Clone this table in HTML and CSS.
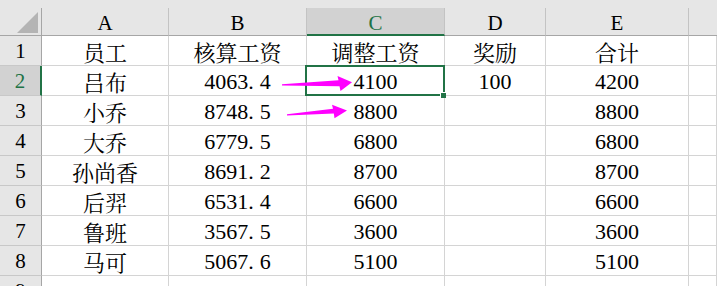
FILE: index.html
```html
<!DOCTYPE html>
<html lang="zh">
<head>
<meta charset="utf-8">
<title>Sheet</title>
<link rel="stylesheet" href="styles.css">
</head>
<body>
<div class="sheet">
  <div class="strip"></div>

  <div class="corner"><div class="tri"></div></div>
  <div class="ch">A</div>
  <div class="ch">B</div>
  <div class="ch ch-sel">C</div>
  <div class="ch">D</div>
  <div class="ch">E</div>
  <div class="ch ch-last"></div>

  <div class="rh">1</div>
  <div class="c">员工</div>
  <div class="c">核算工资</div>
  <div class="c">调整工资</div>
  <div class="c">奖励</div>
  <div class="c">合计</div>
  <div class="c"></div>

  <div class="rh rh-sel">2</div>
  <div class="c">吕布</div>
  <div class="c">4063<span class="dot">.</span>4</div>
  <div class="c sel">4100</div>
  <div class="c">100</div>
  <div class="c">4200</div>
  <div class="c"></div>

  <div class="rh">3</div>
  <div class="c">小乔</div>
  <div class="c">8748<span class="dot">.</span>5</div>
  <div class="c">8800</div>
  <div class="c"></div>
  <div class="c">8800</div>
  <div class="c"></div>

  <div class="rh">4</div>
  <div class="c">大乔</div>
  <div class="c">6779<span class="dot">.</span>5</div>
  <div class="c">6800</div>
  <div class="c"></div>
  <div class="c">6800</div>
  <div class="c"></div>

  <div class="rh">5</div>
  <div class="c">孙尚香</div>
  <div class="c">8691<span class="dot">.</span>2</div>
  <div class="c">8700</div>
  <div class="c"></div>
  <div class="c">8700</div>
  <div class="c"></div>

  <div class="rh">6</div>
  <div class="c">后羿</div>
  <div class="c">6531<span class="dot">.</span>4</div>
  <div class="c">6600</div>
  <div class="c"></div>
  <div class="c">6600</div>
  <div class="c"></div>

  <div class="rh">7</div>
  <div class="c">鲁班</div>
  <div class="c">3567<span class="dot">.</span>5</div>
  <div class="c">3600</div>
  <div class="c"></div>
  <div class="c">3600</div>
  <div class="c"></div>

  <div class="rh">8</div>
  <div class="c">马可</div>
  <div class="c">5067<span class="dot">.</span>6</div>
  <div class="c">5100</div>
  <div class="c"></div>
  <div class="c">5100</div>
  <div class="c"></div>

  <div class="rh">9</div>
  <div class="c"></div>
  <div class="c"></div>
  <div class="c"></div>
  <div class="c"></div>
  <div class="c"></div>
  <div class="c"></div>

  <svg class="arrows" width="717" height="286" viewBox="0 0 717 286" aria-hidden="true">
    <polygon points="282,84.2 338.5,80.2 337.5,76 352,82.3 340.5,91 339.5,86.2 282,85.4" fill="#ff00ff"/>
    <polygon points="287,114.2 333,108.8 332,104.8 347,110.6 334.5,118.2 333.8,113.6 287,115.4" fill="#ff00ff"/>
  </svg>
</div>
</body>
</html>
```

FILE: styles.css
```css
html, body {
  margin: 0;
  padding: 0;
  background: #ffffff;
  overflow: hidden;
}

.sheet {
  position: relative;
  width: 717px;
  height: 286px;
  overflow: hidden;
  display: grid;
  grid-template-columns: 42px 127px 138px 138px 101px 143px 1fr;
  grid-template-rows: 8px 28px repeat(9, 30px);
  font-family: "Liberation Serif", "Noto Serif CJK SC", "Noto Sans CJK SC", serif;
  color: #000;
}

.strip {
  grid-column: 1 / -1;
  background: #e6e6e6;
}

.corner {
  background: #e6e6e6;
  border-right: 1px solid #a6a6a6;
  border-bottom: 1px solid #a6a6a6;
  display: flex;
  justify-content: flex-end;
  align-items: flex-end;
  padding: 0 3px 2px 0;
  box-sizing: border-box;
}

.tri {
  width: 21px;
  height: 21px;
  background: #b4b4b4;
  clip-path: polygon(100% 0, 100% 100%, 0 100%);
}

.ch {
  background: #e6e6e6;
  border-right: 1px solid #c3c3c3;
  border-bottom: 1px solid #a6a6a6;
  box-sizing: border-box;
  display: flex;
  align-items: center;
  justify-content: center;
  font-size: 21px;
  padding-top: 3px;
}

.ch-last {
  border-right: none;
}

.ch-sel {
  background: #d2d2d2;
  color: #217346;
  border-bottom: 2px solid #217346;
  padding-top: 4px;
}

.rh {
  background: #e6e6e6;
  border-right: 1px solid #a6a6a6;
  border-bottom: 1px solid #c8c8c8;
  box-sizing: border-box;
  display: flex;
  align-items: center;
  justify-content: center;
  font-size: 21px;
  padding-top: 2px;
}

.rh-sel {
  background: #d2d2d2;
  color: #217346;
  border-right: 2px solid #217346;
}

.c {
  border-right: 1px solid #d4d4d4;
  border-bottom: 1px solid #d4d4d4;
  box-sizing: border-box;
  display: flex;
  align-items: center;
  justify-content: center;
  font-size: 22px;
  padding-top: 2px;
  white-space: nowrap;
}

.dot {
  display: inline-block;
  width: 11.5px;
  text-align: left;
}

.sel {
  position: relative;
}

.sel::before {
  content: "";
  position: absolute;
  top: -1px;
  left: -2px;
  right: -1px;
  bottom: -1px;
  border: 2px solid #217346;
  z-index: 2;
}

.sel::after {
  content: "";
  position: absolute;
  right: -2px;
  bottom: -3px;
  width: 5px;
  height: 5px;
  background: #217346;
  border-top: 1px solid #fff;
  border-left: 1px solid #fff;
  box-sizing: content-box;
  z-index: 3;
}

.arrows {
  position: absolute;
  top: 0;
  left: 0;
  z-index: 4;
  pointer-events: none;
}
```
